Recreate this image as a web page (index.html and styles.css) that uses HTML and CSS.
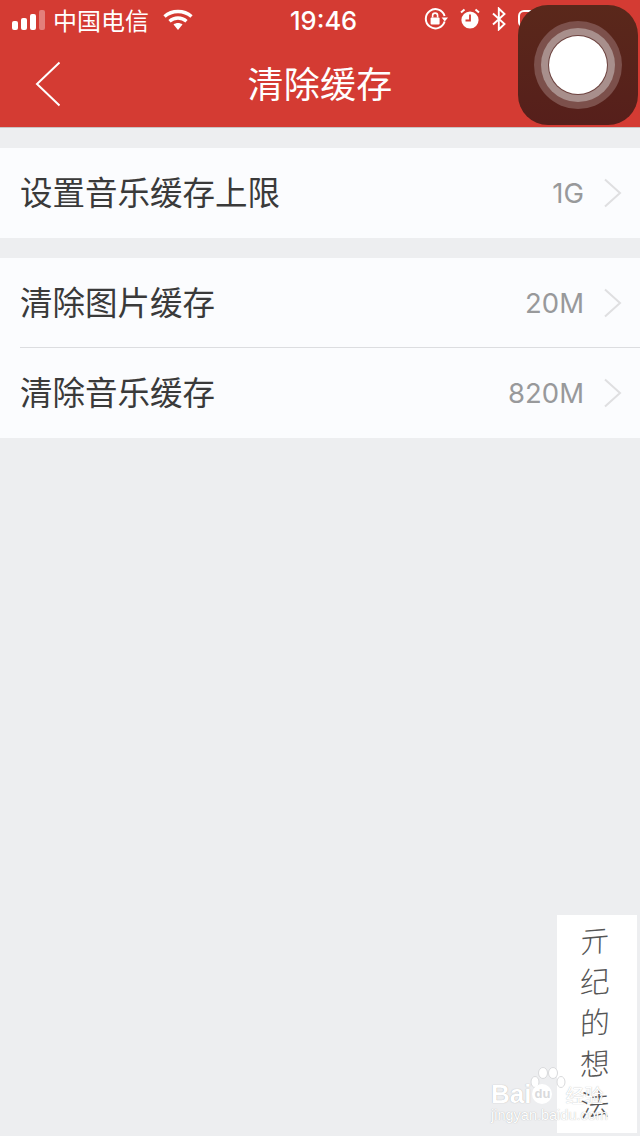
FILE: index.html

```html
<!DOCTYPE html>
<html lang="zh-CN">
<head>
  <meta charset="UTF-8">
  <title>清除缓存</title>
  <meta name="viewport" content="width=device-width, initial-scale=1.0">
  <link rel="stylesheet" href="styles.css">
</head>
<body>

<div class="page">
  <header class="header">
    <div class="status-bar">
      <div class="status-left">
        <div class="signal">
          <span class="bar bar-1"></span>
          <span class="bar bar-2"></span>
          <span class="bar bar-3"></span>
          <span class="bar bar-4"></span>
        </div>
        <span class="carrier">中国电信</span>
        <svg class="wifi" width="30" height="22" viewBox="0 0 30 22">
          <path d="M1.5 7.5C9 .8 21 .8 28.5 7.5" fill="none" stroke="#fff" stroke-width="3.4"/>
          <path d="M6.5 12.2C11.5 8 18.5 8 23.5 12.2" fill="none" stroke="#fff" stroke-width="3.4"/>
          <path d="M10.5 15.4C13 13.4 17 13.4 19.5 15.4L15 21Z" fill="#fff"/>
        </svg>
      </div>
      <span class="time">19:46</span>
      <div class="status-right">
        <svg width="24" height="24" viewBox="0 0 24 24">
          <path d="M20.6 14.5A9.6 9.6 0 1 1 20.6 9" fill="none" stroke="#fff" stroke-width="2"/>
          <path d="M17.6 10.5h6.4l-3.2 4z" fill="#fff"/>
          <rect x="6.6" y="10.5" width="9" height="7" rx="1" fill="#fff"/>
          <path d="M8.6 10.5V8.6a2.5 2.5 0 0 1 5 0v1.9" fill="none" stroke="#fff" stroke-width="1.6"/>
        </svg>
        <svg width="20" height="22" viewBox="0 0 20 22">
          <circle cx="10" cy="12" r="8.6" fill="#fff"/>
          <path d="M10 6.5V12.5H5.5" fill="none" stroke="#d43b33" stroke-width="1.8"/>
          <path d="M1 4.5 4.5 1.5M19 4.5 15.5 1.5" stroke="#fff" stroke-width="2"/>
        </svg>
        <svg width="14" height="24" viewBox="0 0 14 24">
          <path d="M1 6.5 12.5 17 6.8 22.5V1.5L12.5 7 1 17.5" fill="none" stroke="#fff" stroke-width="1.9"/>
        </svg>
        <svg width="30" height="18" viewBox="0 0 30 18">
          <rect x="1" y="1" width="28" height="16" rx="5" fill="none" stroke="#fff" stroke-width="2"/>
        </svg>
      </div>
    </div>
    <div class="nav">
      <svg class="back" width="26" height="46" viewBox="0 0 26 46">
        <path d="M24.5 1.5 2 23 24.5 44.5" fill="none" stroke="#fff" stroke-width="2"/>
      </svg>
      <h1 class="nav-title">清除缓存</h1>
    </div>
  </header>

  <main class="content">
    <section class="group">
      <div class="row">
        <span class="row-label">设置音乐缓存上限</span>
        <span class="row-value">1G</span>
        <svg class="chevron" width="18" height="30" viewBox="0 0 18 30">
          <path d="M1 1.5 16 15 1 28.5" fill="none" stroke="#dfdfe1" stroke-width="2"/>
        </svg>
      </div>
    </section>
    <section class="group">
      <div class="row">
        <span class="row-label">清除图片缓存</span>
        <span class="row-value">20M</span>
        <svg class="chevron" width="18" height="30" viewBox="0 0 18 30">
          <path d="M1 1.5 16 15 1 28.5" fill="none" stroke="#dfdfe1" stroke-width="2"/>
        </svg>
      </div>
      <div class="row">
        <span class="row-label">清除音乐缓存</span>
        <span class="row-value">820M</span>
        <svg class="chevron" width="18" height="30" viewBox="0 0 18 30">
          <path d="M1 1.5 16 15 1 28.5" fill="none" stroke="#dfdfe1" stroke-width="2"/>
        </svg>
      </div>
    </section>
  </main>
</div>

<!-- floating home button -->
<div class="assistive">
  <div class="ring-outer">
    <div class="ring-mid">
      <div class="ring-inner"></div>
    </div>
  </div>
</div>

<div class="signature">
  <span>亓</span>
  <span>纪</span>
  <span>的</span>
  <span>想</span>
  <span>法</span>
</div>

<div class="watermark">
  <svg class="paw" width="36" height="28" viewBox="0 0 36 28">
    <g fill="#fff" stroke="#d9dadc" stroke-width="1">
      <ellipse cx="5" cy="15" rx="4" ry="5.5"/>
      <ellipse cx="13" cy="6" rx="4.5" ry="5.5"/>
      <ellipse cx="23" cy="6" rx="4.5" ry="5.5"/>
      <ellipse cx="31" cy="15" rx="4" ry="5.5"/>
    </g>
  </svg>
  <div class="wm-main">
    <span>Bai</span>
    <span class="wm-du">du</span>
    <span class="wm-cn">经验</span>
  </div>
  <div class="wm-sub">jingyan.baidu.com</div>
</div>

</body>
</html>
```

FILE: styles.css

```css
body {
  margin: 0;
  background: #edeef0;
  font-family: "Noto Sans CJK SC", "Noto Sans", sans-serif;
  color: #333;
}
.page {
  min-height: 1136px;
}
.header {
  background: #d43b33;
  color: #fff;
  height: 128px;
  box-sizing: border-box;
  border-bottom: 1px solid #c9c4c4;
}
.status-bar {
  height: 40px;
  position: relative;
  display: flex;
  align-items: center;
  justify-content: space-between;
  padding: 0 92px 0 12px;
}
.status-left {
  display: flex;
  align-items: center;
}
.signal {
  display: flex;
  align-items: flex-end;
  gap: 3px;
  height: 20px;
}
.bar {
  width: 6px;
  background: #fff;
  border-radius: 2px;
}
.bar-1 { height: 9px; }
.bar-2 { height: 12px; }
.bar-3 { height: 16px; }
.bar-4 { height: 20px; background: rgba(255,255,255,0.35); }
.carrier {
  font-size: 24px;
  line-height: 40px;
  margin-left: 8px;
}
.wifi {
  margin-left: 14px;
}
.time {
  position: absolute;
  left: 290px;
  font-family: Inter, "Liberation Sans", sans-serif;
  font-size: 25.5px;
  font-weight: 500;
}
.status-right {
  display: flex;
  align-items: center;
  gap: 12px;
  margin-top: -2px;
}
.nav {
  height: 87px;
  box-sizing: border-box;
  padding-bottom: 4px;
  position: relative;
  display: flex;
  align-items: center;
  justify-content: center;
}
.back {
  position: absolute;
  left: 35px;
  top: 21px;
}
.nav-title {
  margin: 0;
  font-size: 36px;
  letter-spacing: 0.3px;
  font-weight: 400;
}
.content {
  padding-top: 20px;
}
.group {
  background: #fbfcfe;
  margin-bottom: 20px;
}
.row {
  height: 90px;
  box-sizing: border-box;
  margin-left: 20px;
  padding-right: 18px;
  display: flex;
  align-items: center;
}
.row:not(:last-child) {
  border-bottom: 1px solid #dcdde0;
}
.row-label {
  flex: 1;
  font-size: 32.5px;
  color: #3a3a3a;
  padding-bottom: 5px;
}
.row-value {
  font-family: Inter, "Liberation Sans", sans-serif;
  font-size: 27.5px;
  color: #98999b;
}
.chevron {
  margin-left: 20px;
}
.assistive {
  position: absolute;
  left: 518px;
  top: 5px;
  width: 120px;
  height: 120px;
  background: linear-gradient(#5a281b, #561f1b);
  border-radius: 30px;
  display: flex;
  align-items: center;
  justify-content: center;
}
.ring-outer {
  width: 88px;
  height: 88px;
  border-radius: 50%;
  background: #7c504b;
  display: flex;
  align-items: center;
  justify-content: center;
}
.ring-mid {
  width: 74px;
  height: 74px;
  border-radius: 50%;
  background: #a88f8c;
  display: flex;
  align-items: center;
  justify-content: center;
}
.ring-inner {
  width: 58px;
  height: 58px;
  border-radius: 50%;
  background: #fff;
  box-shadow: 0 0 0 1px #6e4440;
}
.signature {
  position: absolute;
  left: 557px;
  top: 915px;
  width: 80px;
  height: 218px;
  background: #fff;
  color: #555;
  display: flex;
  flex-direction: column;
  align-items: center;
  font-size: 30px;
  font-weight: 300;
  line-height: 41px;
  padding: 4px 4px 0 0;
  box-sizing: border-box;
}
.signature span {
  transform: rotate(-5deg) skewX(-6deg);
}
.watermark {
  position: absolute;
  left: 491px;
  top: 1067px;
  width: 149px;
  color: #fff;
  text-shadow: 0 0 1px rgba(110,110,110,0.55);
}
.paw {
  position: absolute;
  left: 39px;
  top: 0;
}
.wm-main {
  margin-top: 16px;
  display: flex;
  align-items: center;
  height: 22px;
  font-family: "Liberation Sans", sans-serif;
  font-size: 26px;
  font-weight: 700;
  white-space: nowrap;
}
.wm-du {
  position: relative;
  font-size: 13px;
  margin-left: 1px;
  width: 20px;
  height: 20px;
  line-height: 20px;
  text-align: center;
  background: #fff;
  color: #d9dadc;
  border-radius: 50%;
  text-shadow: none;
}
.wm-cn {
  font-family: "Noto Sans CJK SC", sans-serif;
  font-size: 19px;
  font-weight: 400;
  margin-left: 13px;
}
.wm-sub {
  font-family: "Liberation Sans", sans-serif;
  font-size: 14.5px;
  line-height: 17px;
  margin-top: 2px;
  white-space: nowrap;
}
```
